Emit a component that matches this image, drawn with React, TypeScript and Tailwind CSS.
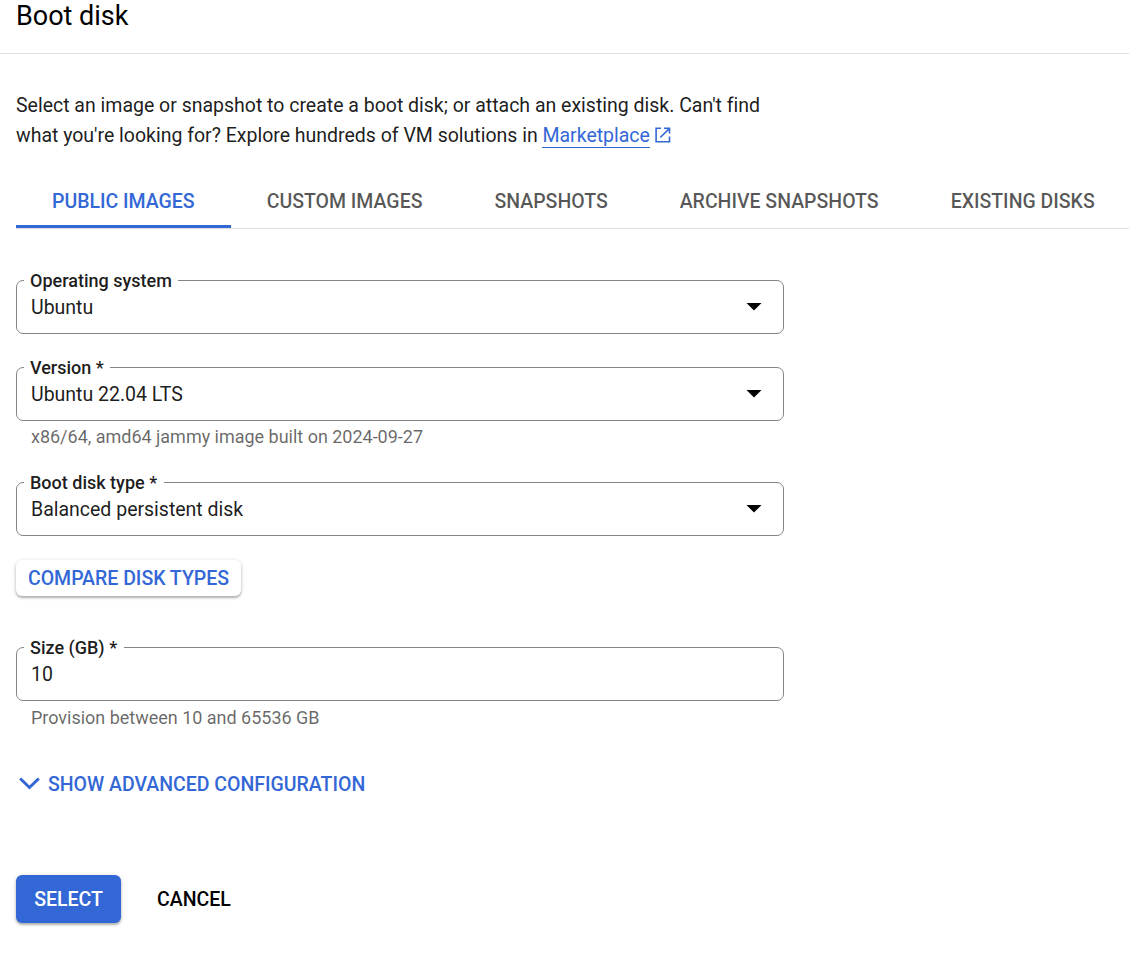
import type { ReactNode } from "react";

const tabs = ["Public images", "Custom images", "Snapshots", "Archive snapshots", "Existing disks"];

function Field({ label, value, hint, select = false }: { label: string; value: string; hint?: ReactNode; select?: boolean }) {
  return (
    <div className="w-[768px]">
      <div className="relative flex h-[54px] items-center justify-between rounded-[7px] border border-[#80868b] pl-3.5 pr-[21px]">
        <label className="absolute -top-3 left-[7px] h-6 whitespace-nowrap bg-white pl-1.5 pr-[6.5px] text-[18px] leading-6 font-medium text-black/90">
          {label}
        </label>
        <span className="pt-0.5 text-[19.5px] leading-[30px] tracking-[-0.008px] text-black/90">{value}</span>
        {select && (
          <svg className="h-2 w-4" viewBox="0 0 16 8" fill="#000">
            <path d="M0.5 0h15L8 7.6z" />
          </svg>
        )}
      </div>
      {hint}
    </div>
  );
}

function Caps({ children }: { children: ReactNode }) {
  return (
    <span className="whitespace-nowrap pt-0.5 text-[19.5px] leading-[30px] font-medium tracking-[-0.01px] uppercase">
      {children}
    </span>
  );
}

export default function App() {
  return (
    <div className="h-[961px] w-full overflow-hidden bg-white font-['Roboto',sans-serif] text-black/90">
      <header className="flex h-[54px] items-start border-b border-[#e0e0e0] pl-4">
        <h1 className="text-[27px] leading-8 tracking-[-0.02px] text-black">Boot disk</h1>
      </header>
      <main className="pl-4">
        <p className="mt-[37px] text-[19.5px] leading-[30px] tracking-[-0.008px] whitespace-nowrap">
          Select an image or snapshot to create a boot disk; or attach an existing disk. Can't find
          <br />
          what you're looking for? Explore hundreds of VM solutions in{" "}
          <a className="border-b border-[#3367d6] text-[#3367d6]">Marketplace</a>
          <svg className="ml-1 inline-block size-[18px] align-[-2px]" viewBox="0 0 18 18" fill="none" stroke="#3367d6" strokeWidth="1.6">
            <path d="M7 2.3H2.1v13.4h13.4V10.5M10 2.3h5.5V7.5M15.2 2.6L6.3 11.5" />
          </svg>
        </p>
        <nav className="mt-[23px] flex h-[55px] border-b border-[#e0e0e0]">
          {tabs.map((tab, i) => (
            <button
              key={tab}
              className={
                i === 0
                  ? "flex h-[54px] shrink-0 items-start border-b-3 border-[#3367d6] px-9 pt-[11px] text-[#3367d6]"
                  : "flex h-[54px] shrink-0 items-start px-9 pt-[11px] text-black/66"
              }
            >
              <Caps>{tab}</Caps>
            </button>
          ))}
        </nav>
        <div className="mt-[51px]">
          <Field label="Operating system" value="Ubuntu" select />
        </div>
        <div className="mt-[33px]">
          <Field
            label="Version *"
            value="Ubuntu 22.04 LTS"
            hint={
              <p className="ml-[15px] mt-1 text-[18px] leading-6 tracking-[-0.015px] text-black/60">
                x86/64, amd64 jammy image built on 2024-09-27
              </p>
            }
            select
          />
        </div>
        <div className="mt-[33px]">
          <Field label="Boot disk type *" value="Balanced persistent disk" select />
        </div>
        <button className="mt-6 flex h-9 w-[225px] items-center justify-center rounded-md text-[#3367d6] shadow-[0_1px_4px_rgba(0,0,0,0.2),0_2px_2px_rgba(0,0,0,0.2)]">
          <Caps>Compare disk types</Caps>
        </button>
        <div className="mt-[51px]">
          <Field
            label="Size (GB) *"
            value="10"
            hint={
              <p className="ml-[15px] mt-[5px] text-[18px] leading-6 tracking-[-0.015px] text-black/60">
                Provision between 10 and 65536 GB
              </p>
            }
          />
        </div>
        <button className="mt-[39px] flex h-[30px] items-center text-[#3367d6]">
          <svg className="-mt-0.5 ml-[3px] mr-2 h-[13px] w-[21px]" viewBox="0 0 21 13" fill="none" stroke="currentColor" strokeWidth="3">
            <path d="M1.2 1.5L10.5 10.5L19.8 1.5" />
          </svg>
          <Caps>Show advanced configuration</Caps>
        </button>
        <div className="mt-[76px] flex items-center gap-9">
          <button className="flex h-12 w-[105px] items-center justify-center rounded-md bg-[#3367d6] text-white shadow-[0_1px_4px_rgba(0,0,0,0.2),0_2px_2px_rgba(0,0,0,0.2)]">
            <Caps>Select</Caps>
          </button>
          <button className="flex items-center text-black">
            <Caps>Cancel</Caps>
          </button>
        </div>
      </main>
    </div>
  );
}
